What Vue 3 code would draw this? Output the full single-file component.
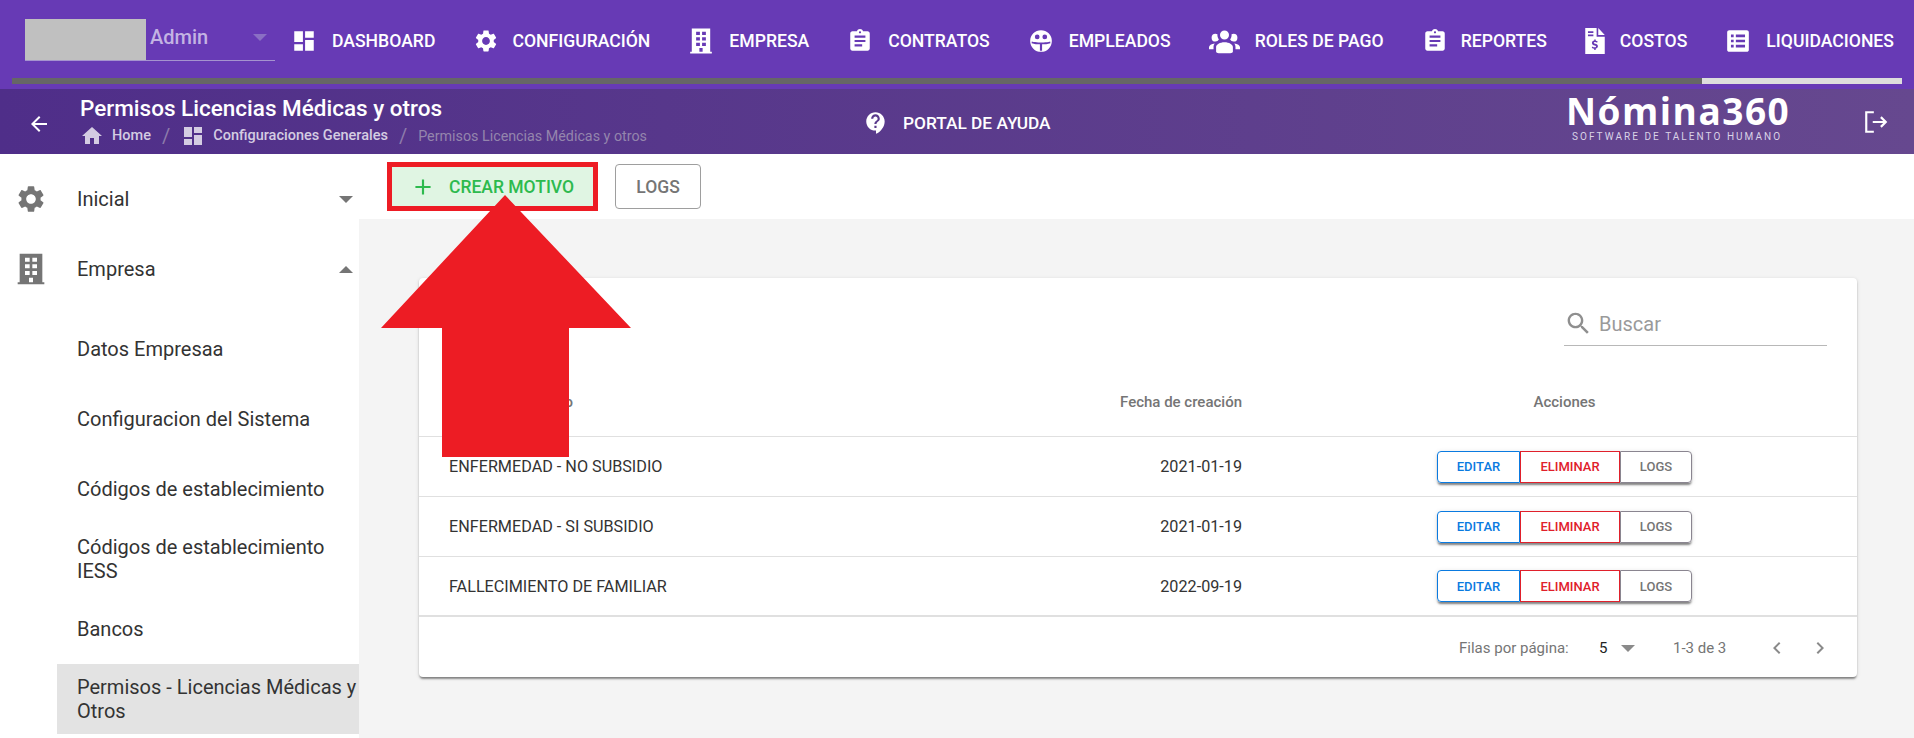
<template>
  <div class="page">
    <header class="topbar">
      <div class="topbar-row">
        <div class="user-select">
          <div class="user-photo"></div>
          <span class="user-name">Admin</span>
          <span class="caret caret-down user-caret"></span>
        </div>
        <nav class="main-nav">
          <a v-for="item in navItems" :key="item.label" class="nav-item">
            <svg class="nav-icon" :class="item.size" viewBox="0 0 24 24"><path :d="item.icon" fill-rule="evenodd" /></svg>
            <span>{{ item.label }}</span>
          </a>
        </nav>
      </div>
      <div class="progress"><div class="progress-fill"></div></div>
    </header>

    <div class="subheader">
      <svg class="back-icon" viewBox="0 0 24 24"><path :d="icons.back" /></svg>
      <div class="page-title">
        <h1>Permisos Licencias Médicas y otros</h1>
        <div class="breadcrumbs">
          <svg viewBox="0 0 24 24"><path :d="icons.home" /></svg>
          <span class="crumb">Home</span>
          <span class="sep">/</span>
          <svg viewBox="0 0 24 24"><path :d="icons.dashboard" /></svg>
          <span class="crumb">Configuraciones Generales</span>
          <span class="sep">/</span>
          <span class="crumb-current">Permisos Licencias Médicas y otros</span>
        </div>
      </div>
      <div class="help-link">
        <svg viewBox="0 0 24 24"><path :d="icons.help" /></svg>
        <span>PORTAL DE AYUDA</span>
      </div>
      <div class="logo">
        <div class="logo-name">Nómina360</div>
        <div class="logo-tag">SOFTWARE DE TALENTO HUMANO</div>
      </div>
      <svg class="logout-icon" viewBox="0 0 24 24">
        <path d="M10 3H3v18h7M9 12h12M16.500 7.500 21 12l-4.500 4.500" />
      </svg>
    </div>

    <div class="body-row">
      <aside class="sidebar">
        <div class="side-item">
          <svg class="side-icon" viewBox="0 0 24 24"><path :d="icons.settings" /></svg>
          <span>Inicial</span>
          <span class="caret caret-down side-caret"></span>
        </div>
        <div class="side-item">
          <svg class="side-icon" viewBox="0 0 24 24"><path :d="icons.building" fill-rule="evenodd" /></svg>
          <span>Empresa</span>
          <span class="caret caret-up side-caret"></span>
        </div>
        <ul class="side-sub">
          <li v-for="link in subLinks" :key="link" :class="{ active: link === activeLink }">{{ link }}</li>
        </ul>
      </aside>

      <main class="content">
        <div class="toolbar">
          <button class="btn-create">
            <svg viewBox="0 0 24 24"><path d="M19 13h-6v6h-2v-6H5v-2h6V5h2v6h6v2z" /></svg>
            CREAR MOTIVO
          </button>
          <button class="btn-logs">LOGS</button>
        </div>

        <div class="content-area">
          <section class="card">
            <div class="card-head">
              <div class="search">
                <svg viewBox="0 0 24 24"><path :d="icons.search" /></svg>
                <span>Buscar</span>
              </div>
            </div>
            <table class="grid">
              <colgroup>
                <col class="col-name" />
                <col class="col-date" />
                <col />
              </colgroup>
              <thead>
                <tr>
                  <th class="name-cell">Nombre de motivo</th>
                  <th class="date-cell">Fecha de creación</th>
                  <th class="actions-cell">Acciones</th>
                </tr>
              </thead>
              <tbody>
                <tr v-for="row in rows" :key="row.name">
                  <td class="name-cell">{{ row.name }}</td>
                  <td class="date-cell">{{ row.date }}</td>
                  <td class="actions-cell">
                    <div class="btn-group">
                      <button class="edit">EDITAR</button>
                      <button class="del">ELIMINAR</button>
                      <button class="log">LOGS</button>
                    </div>
                  </td>
                </tr>
              </tbody>
            </table>
            <div class="pager">
              <span class="pager-label">Filas por página:</span>
              <span class="pager-size">5</span>
              <span class="caret caret-down pager-caret"></span>
              <span class="pager-range">1-3 de 3</span>
              <svg class="chev chev-prev" viewBox="0 0 24 24"><path d="M15.410 7.410 14 6l-6 6 6 6 1.410-1.410L10.830 12z" /></svg>
              <svg class="chev" viewBox="0 0 24 24"><path d="M10 6 8.590 7.410 13.170 12l-4.580 4.590L10 18l6-6z" /></svg>
            </div>
          </section>
        </div>
      </main>
    </div>

    <!-- arrow drawn over the screen as annotation -->
    <svg class="annotation" viewBox="0 0 250 262">
      <path d="M124 0 L250 133 H188 V262 H61 V133 H0 Z" />
    </svg>
  </div>
</template>

<script setup>
const icons = {
  back: 'M20 11H7.830l5.590-5.590L12 4l-8 8 8 8 1.410-1.410L7.830 13H20v-2z',
  home: 'M10 20v-6h4v6h5v-8h3L12 3 2 12h3v8z',
  dashboard: 'M3 13h8V3H3v10zm0 8h8v-6H3v6zm10 0h8V11h-8v10zm0-18v6h8V3h-8z',
  help: 'M11.500 2C6.810 2 3 5.810 3 10.500S6.810 19 11.500 19h.5v3c4.860-2.340 8-7 8-11.500C20 5.810 16.190 2 11.500 2zm1 14.500h-2v-2h2v2zm0-3.500h-2c0-3.250 3-3 3-5 0-1.100-.9-2-2-2s-2 .9-2 2h-2c0-2.210 1.790-4 4-4s4 1.790 4 4c0 2.500-3 2.750-3 5z',
  settings: 'M19.140 12.940c.04-.3.06-.61.06-.94 0-.32-.02-.64-.07-.94l2.030-1.580c.18-.14.23-.41.12-.61l-1.920-3.320c-.12-.22-.37-.29-.59-.22l-2.390.96c-.5-.38-1.030-.7-1.620-.94l-.36-2.540c-.04-.24-.24-.41-.48-.41h-3.840c-.24 0-.43.17-.47.41l-.36 2.540c-.59.24-1.130.57-1.620.94l-2.390-.96c-.22-.08-.47 0-.59.22L2.740 8.870c-.12.21-.08.47.12.61l2.030 1.580c-.05.3-.09.63-.09.94s.02.64.07.94l-2.030 1.580c-.18.14-.23.41-.12.61l1.920 3.320c.12.22.37.29.59.22l2.390-.96c.5.38 1.030.7 1.620.94l.36 2.540c.05.24.24.41.48.41h3.840c.24 0 .44-.17.47-.41l.36-2.540c.59-.24 1.130-.56 1.620-.94l2.390.96c.22.08.47 0 .59-.22l1.920-3.320c.12-.22.07-.47-.12-.61l-2.010-1.580zM12 15.600c-1.980 0-3.600-1.620-3.600-3.600s1.620-3.600 3.600-3.600 3.600 1.620 3.600 3.600-1.620 3.600-3.600 3.600z',
  building: 'M3.500 .5h17v21.500H22v1.500H2V22h1.500zM7.500 3.500v3h3.500v-3zM13 3.500v3h3.500v-3zM7.500 8.500v3h3.500v-3zM13 8.500v3h3.500v-3zM7.500 13.500v3h3.500v-3zM13 13.500v3h3.500v-3zM10.500 18.500V22h3v-3.500z',
  search: 'M15.500 14h-.79l-.28-.27C15.410 12.590 16 11.110 16 9.500 16 5.910 13.090 3 9.500 3S3 5.910 3 9.500 5.910 16 9.500 16c1.610 0 3.090-.59 4.230-1.570l.27.28v.79l5 4.990L20.490 19l-4.990-5zm-6 0C7.010 14 5 11.990 5 9.500S7.010 5 9.500 5 14 7.010 14 9.500 11.990 14 9.500 14z',
}

const clipboard = 'M19 3h-4.180C14.400 1.840 13.300 1 12 1c-1.300 0-2.400.84-2.820 2H5c-1.100 0-2 .9-2 2v14c0 1.100.9 2 2 2h14c1.100 0 2-.9 2-2V5c0-1.100-.9-2-2-2zm-7 0c.55 0 1 .45 1 1s-.45 1-1 1-1-.45-1-1 .45-1 1-1zm2 14H7v-2h7v2zm3-4H7v-2h10v2zm0-4H7V7h10v2z'

const navItems = [
  { label: 'DASHBOARD', icon: icons.dashboard },
  { label: 'CONFIGURACIÓN', icon: icons.settings, size: 'slim' },
  { label: 'EMPRESA', icon: icons.building },
  { label: 'CONTRATOS', icon: clipboard },
  {
    label: 'EMPLEADOS',
    icon: 'M12 2a10 10 0 1 0 0 20 10 10 0 0 0 0-20zM8.500 6a2.200 2.200 0 1 0 0 4.400 2.200 2.200 0 0 0 0-4.400zM15.500 6a2.200 2.200 0 1 0 0 4.400 2.200 2.200 0 0 0 0-4.400zM3.500 12.500c3 1 5.500 .8 8.500 .8s5.500 .2 8.500-.8l.2 1.500c-2.700.9-5 1-7.700 1v6h-2v-6c-2.700 0-5-.1-7.700-1z',
  },
  {
    label: 'ROLES DE PAGO',
    size: 'wide',
    icon: 'M12 3.500a3.500 3.500 0 1 1 0 7 3.500 3.500 0 0 1 0-7M5 6a3 3 0 0 1 1.530.42c-.15 1.430.27 2.850 1.130 3.960A3 3 0 0 1 5 12a3 3 0 0 1 0-6m14 0a3 3 0 0 1 0 6 3 3 0 0 1-2.660-1.620c.86-1.110 1.280-2.530 1.130-3.960A3 3 0 0 1 19 6M5.500 16.250c0-2.070 2.910-3.750 6.500-3.750s6.500 1.680 6.500 3.750V20c0 .5-1 1-2 1h-9c-1 0-2-.5-2-1zM0 18v-1.500c0-1.390 1.890-2.560 4.450-2.900-.59.68-.95 1.620-.95 2.650V18zm24 0h-3.500v-1.750c0-1.030-.36-1.970-.95-2.650 2.560.34 4.450 1.510 4.450 2.900z',
  },
  { label: 'REPORTES', icon: clipboard, size: 'slim' },
  {
    label: 'COSTOS',
    size: 'narrow',
    icon: 'M15 0l6 6.500H15zM3 0h10.500v8h7.500v16H3zM5.500 3v1.500h5V3zM5.500 6v1.500h5V6zM11.300 10.500v1.100c-1.300.3-2.100 1.100-2.100 2.200 0 1.400 1.100 1.900 2.500 2.300 1 .3 1.300.5 1.300.9 0 .5-.5.8-1.300.8-.8 0-1.500-.3-2.100-.8l-.6 1.200c.6.5 1.400.8 2.300.9v1.100h1.300v-1.100c1.300-.2 2.100-1.100 2.100-2.200 0-1.500-1.200-2-2.600-2.400-1-.3-1.200-.5-1.200-.8 0-.4.4-.7 1.200-.7.7 0 1.300.2 1.800.6l.6-1.200c-.5-.3-1.100-.6-1.800-.7v-1.100z',
  },
  {
    label: 'LIQUIDACIONES',
    icon: 'M4 2h16c1.200 0 2 .8 2 2v16c0 1.200-.8 2-2 2H4c-1.200 0-2-.8-2-2V4c0-1.200.8-2 2-2zM5.500 6v2.500H8V6zM10 6v2.500h8.500V6zM5.500 10.750v2.500H8v-2.500zM10 10.750v2.500h8.500v-2.500zM5.500 15.500V18H8v-2.500zM10 15.500V18h8.500v-2.500z',
  },
]

const subLinks = [
  'Datos Empresaa',
  'Configuracion del Sistema',
  'Códigos de establecimiento',
  'Códigos de establecimiento IESS',
  'Bancos',
  'Permisos - Licencias Médicas y Otros',
]
const activeLink = 'Permisos - Licencias Médicas y Otros'

const rows = [
  { name: 'ENFERMEDAD - NO SUBSIDIO', date: '2021-01-19' },
  { name: 'ENFERMEDAD - SI SUBSIDIO', date: '2021-01-19' },
  { name: 'FALLECIMIENTO DE FAMILIAR', date: '2022-09-19' },
]
</script>

<style>
html, body { margin: 0; background: #fff; }
</style>

<style scoped>
.page {
  position: relative;
  width: 1914px;
  height: 738px;
  overflow: hidden;
  display: flex;
  flex-direction: column;
  font-family: Roboto, "Liberation Sans", sans-serif;
  color: #333;
}

/* caret triangles */
.caret {
  display: inline-block;
  width: 0;
  height: 0;
  border-left: 7px solid transparent;
  border-right: 7px solid transparent;
}
.caret-down { border-top: 7px solid #757575; }
.caret-up { border-bottom: 7px solid #757575; }

/* Top bar */
.topbar {
  background: #673ab5;
  height: 89px;
  color: #fff;
  flex: none;
}
.topbar-row {
  height: 78px;
  display: flex;
}
.user-select {
  position: relative;
  width: 250px;
  height: 41px;
  margin: 19px 0 0 25px;
  border-bottom: 1px solid #a593cf;
  display: flex;
  flex: none;
}
.user-photo {
  width: 121px;
  height: 41px;
  background: #c0c0c0;
}
.user-name {
  margin: 6px 0 0 4px;
  font-size: 20px;
  font-weight: 500;
  color: #c3b3e3;
}
.user-caret {
  position: absolute;
  right: 8px;
  top: 15px;
  border-top-color: #8a6fc4;
}
.main-nav {
  display: flex;
  gap: 38px;
  margin-left: 16px;
  align-items: center;
  padding-top: 4px;
}
.nav-item {
  display: flex;
  align-items: center;
  gap: 15px;
  font-size: 17.600px;
  font-weight: 500;
  white-space: nowrap;
}
.nav-icon {
  width: 26px;
  height: 26px;
  fill: #fff;
  flex: none;
}
.nav-icon.slim {
  margin-right: -2px;
}
.nav-icon.wide {
  width: 31px;
  height: 31px;
}
.nav-icon.narrow {
  margin: 0 -3px;
}
.progress {
  height: 6px;
  margin: 0 12px;
  background: #ddd;
}
.progress-fill {
  width: 1690px;
  height: 100%;
  background: #666;
}

/* Sub header */
.subheader {
  height: 65px;
  flex: none;
  display: flex;
  align-items: center;
  background: linear-gradient(90deg, #4f2e89, #66488f);
  color: #fff;
}
.back-icon {
  width: 24px;
  height: 24px;
  fill: #fff;
  margin: 4px 0 0 27px;
  flex: none;
}
.page-title {
  margin-left: 29px;
  width: 772px;
  flex: none;
}
.page-title h1 {
  margin: -3px 0 0;
  font-size: 22.500px;
  font-weight: 500;
  line-height: 28px;
}
.breadcrumbs {
  display: flex;
  align-items: center;
  font-size: 14.500px;
  height: 22px;
  margin-top: 3px;
  color: #d4cce2;
}
.breadcrumbs svg {
  width: 24px;
  height: 24px;
  fill: #d4cce2;
}
.crumb {
  font-weight: 500;
  margin-left: 8px;
}
.sep {
  margin: 0 11px;
  font-size: 20px;
  color: #8d7bab;
}
.crumb-current {
  color: #9485ad;
  font-size: 14.300px;
}
.help-link {
  display: flex;
  align-items: center;
  gap: 14px;
  font-size: 17.300px;
  font-weight: 500;
  margin: 2px 0 0 11px;
  flex: none;
}
.help-link svg {
  width: 26px;
  height: 26px;
  fill: #fff;
}
.logo {
  margin: 0 0 5px auto;
  width: 224px;
  flex: none;
}
.logo-name {
  font-family: "Open Sans", sans-serif;
  font-size: 37px;
  font-weight: 700;
  letter-spacing: 1.500px;
  line-height: 30px;
  white-space: nowrap;
}
.logo-tag {
  font-size: 10px;
  line-height: 12px;
  letter-spacing: 2.050px;
  white-space: nowrap;
  color: #d9d2e6;
  margin: 5px 0 0 6px;
}
.logout-icon {
  width: 26px;
  height: 26px;
  fill: none;
  stroke: #fff;
  stroke-width: 2;
  margin: 0 25px 0 73px;
  flex: none;
}

/* Sidebar */
.body-row {
  flex: 1;
  display: flex;
  min-height: 0;
}
.sidebar {
  width: 359px;
  flex: none;
  padding-top: 10px;
  font-size: 20px;
  color: #333;
  box-sizing: border-box;
}
.side-item {
  height: 70px;
  display: flex;
  align-items: center;
  padding-left: 77px;
  position: relative;
}
.side-icon {
  position: absolute;
  left: 15px;
  top: 19px;
  width: 32px;
  height: 32px;
  fill: #757575;
}
.side-caret {
  position: absolute;
  left: 339px;
  top: 32px;
}
.side-sub {
  list-style: none;
  margin: 10px 0 0;
  padding: 0 0 0 57px;
}
.side-sub li {
  height: 70px;
  box-sizing: border-box;
  padding-left: 20px;
  display: flex;
  align-items: center;
  line-height: 24px;
}
.side-sub li.active {
  background: #e3e3e3;
}

/* Main */
.content {
  flex: 1;
  display: flex;
  flex-direction: column;
  min-width: 0;
}
.toolbar {
  height: 65px;
  flex: none;
  display: flex;
  align-items: center;
  padding-left: 28px;
  gap: 17px;
}
button {
  font-family: inherit;
  cursor: pointer;
  background: #fff;
}
.btn-create {
  width: 211px;
  height: 49px;
  border: 5px solid #ed1c24;
  background: #e0f5e3;
  color: #2dba4e;
  font-size: 17.500px;
  font-weight: 500;
  display: flex;
  align-items: center;
  padding: 0 0 0 18px;
  gap: 13px;
  box-sizing: border-box;
  white-space: nowrap;
}
.btn-create svg {
  width: 26px;
  height: 26px;
  fill: #2dba4e;
  flex: none;
}
.btn-logs {
  width: 86px;
  height: 45px;
  border: 1px solid #9e9e9e;
  border-radius: 4px;
  color: #757575;
  font-size: 17.500px;
  font-weight: 500;
}
.content-area {
  flex: 1;
  background: #f4f4f4;
  padding: 59px 57px 0 60px;
}
.card {
  height: 399px;
  background: #fff;
  border-radius: 4px;
  box-shadow: 0 3px 2px -1px rgba(0, 0, 0, .35), 0 1px 2px 0 rgba(0, 0, 0, .14), 0 1px 4px 0 rgba(0, 0, 0, .12);
}
.card-head {
  height: 90px;
  display: flex;
  justify-content: flex-end;
  box-sizing: border-box;
  padding: 0 30px 22px 0;
  align-items: flex-end;
}
.search {
  width: 263px;
  height: 40px;
  border-bottom: 1px solid #b8b8b8;
  display: flex;
  align-items: center;
  gap: 6px;
  font-size: 20px;
  color: #9a9a9a;
  padding: 2px 0 6px;
  box-sizing: border-box;
}
.search svg {
  width: 29px;
  height: 29px;
  fill: #8f8f8f;
}
.grid {
  width: 100%;
  border-collapse: collapse;
  table-layout: fixed;
}
.col-name { width: 560px; }
.col-date { width: 293px; }
.grid th {
  height: 68px;
  box-sizing: border-box;
  font-size: 15px;
  font-weight: 500;
  color: #757575;
  border-bottom: 1px solid #e0e0e0;
  padding: 1px 0 0;
  vertical-align: middle;
}
.grid td {
  height: 60px;
  box-sizing: border-box;
  font-size: 16.200px;
  border-bottom: 1px solid #e0e0e0;
  padding: 1px 0 0;
}
.grid tbody tr:last-child td {
  border-bottom-width: 2px;
}
.name-cell {
  text-align: left;
  padding-left: 30px !important;
}
.date-cell {
  text-align: right;
  padding-right: 30px !important;
}
.actions-cell {
  text-align: center;
}
.btn-group {
  display: inline-flex;
  vertical-align: middle;
  border-radius: 4px;
  box-shadow: 0 3px 2px -1px rgba(0, 0, 0, .35), 0 2px 2px 0 rgba(0, 0, 0, .14), 0 1px 5px 0 rgba(0, 0, 0, .12);
}
.btn-group button {
  height: 32px;
  font-size: 13px;
  font-weight: 500;
  padding: 0;
  box-sizing: border-box;
  border: 1px solid;
}
.edit {
  width: 83px;
  color: #0a7ae0;
  border-color: #0a7ae0 !important;
  border-radius: 4px 0 0 4px;
}
.del {
  width: 100px;
  color: #e0202b;
  border-color: #e0202b !important;
}
.log {
  width: 72px;
  color: #757575;
  border-color: #8a8590 !important;
  border-radius: 0 4px 4px 0;
}
.pager {
  height: 60px;
  display: flex;
  align-items: center;
  padding: 2px 0 0 1040px;
  box-sizing: border-box;
  font-size: 15px;
  color: #757575;
}
.pager-label { width: 140px; flex: none; }
.pager-size { color: #222; width: 22px; flex: none; }
.pager-caret { flex: none; border-top-color: #8a8a8a; }
.pager-range { margin-left: 38px; width: 54px; white-space: nowrap; flex: none; }
.chev {
  width: 24px;
  height: 24px;
  fill: #8a8a8a;
  flex: none;
}
.chev-prev { margin: 0 19px 0 38px; }

/* annotation */
.annotation {
  position: absolute;
  left: 381px;
  top: 195px;
  width: 250px;
  height: 262px;
  fill: #ed1c24;
}
</style>
